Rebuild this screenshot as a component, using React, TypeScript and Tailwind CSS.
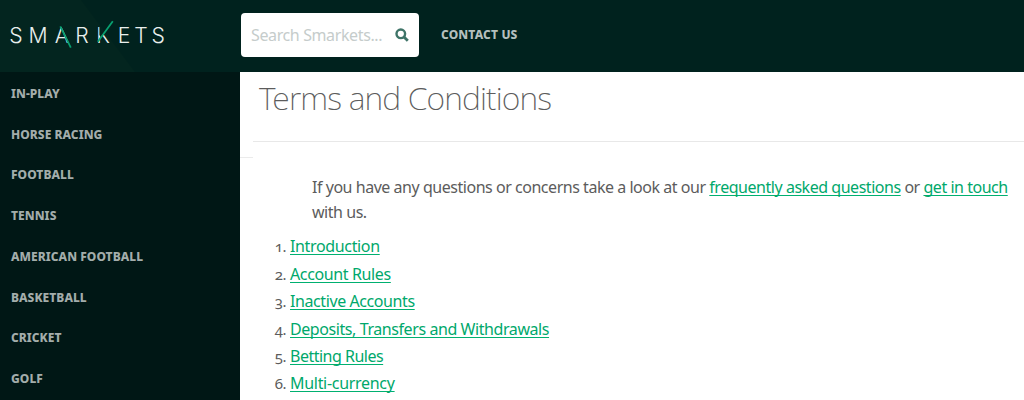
const sports = [
  "In-play",
  "Horse Racing",
  "Football",
  "Tennis",
  "American Football",
  "Basketball",
  "Cricket",
  "Golf",
];

const sections = [
  { title: "Introduction", tracking: "tracking-[-0.35px]" },
  { title: "Account Rules", tracking: "tracking-[-0.37px]" },
  { title: "Inactive Accounts", tracking: "tracking-[-0.41px]" },
  { title: "Deposits, Transfers and Withdrawals", tracking: "tracking-[-0.42px]" },
  { title: "Betting Rules", tracking: "tracking-[-0.5px]" },
  { title: "Multi-currency", tracking: "tracking-[-0.3px]" },
];

function Logo() {
  return (
    <svg width="240" height="72" viewBox="0 0 240 72" className="block" aria-label="Smarkets">
      <path d="M0 0H81L135 72H0Z" fill="#03251f" />
      {/* the green strokes take the place of one arm of the A and the K */}
      <clipPath id="a-left">
        <path d="M50 24H60L70 44H50Z" />
      </clipPath>
      <clipPath id="k-stem">
        <path d="M94 24H99.5V35L101 38L103.5 33.5L114 44H94Z" />
      </clipPath>
      <g
        fill="#e9efed"
        fontSize="21.2"
        fontWeight="300"
        textAnchor="middle"
        className="font-['Inter',sans-serif]"
      >
        <text x="16" y="42.5">S</text>
        <text x="38" y="42.5">M</text>
        <text x="61.8" y="42.5" clipPath="url(#a-left)">A</text>
        <text x="82" y="42.5">R</text>
        <text x="103" y="42.5" clipPath="url(#k-stem)">K</text>
        <text x="124" y="42.5">E</text>
        <text x="141" y="42.5">T</text>
        <text x="158.2" y="42.5">S</text>
      </g>
      <path d="M60.3 26.3L70.8 47.6M97.8 41.7L112.8 21.2" stroke="#08a070" strokeWidth="1.8" fill="none" />
    </svg>
  );
}

function TextLink({ children, className = "" }: { children: string; className?: string }) {
  return (
    <a
      href="#"
      className={`text-[#00a86b] underline decoration-[#00b070] decoration-1 underline-offset-[2px] [text-decoration-skip-ink:none] ${className}`}
    >
      {children}
    </a>
  );
}

export default function App() {
  return (
    <div className="h-[400px] w-[1024px] overflow-hidden bg-white font-['Noto_Sans',sans-serif] text-[#5c5c5c]">
      <header className="flex h-[72px] bg-[#00221e]">
        <Logo />
        <div className="ml-px mt-[13px] flex h-11 w-[178px] items-center rounded bg-white pl-[10px] pr-[10px]">
          <span className="flex-1 whitespace-nowrap text-base tracking-[-0.38px] text-[#c5cccb]">Search Smarkets...</span>
          <svg width="14" height="14" viewBox="0 0 14 14" fill="none" stroke="#3f7468" className="shrink-0">
            <circle cx="5.8" cy="5.8" r="4.3" strokeWidth="2.4" />
            <path d="M9 9L12.8 12.8" strokeWidth="2.8" />
          </svg>
        </div>
        <a
          href="#"
          className="ml-[22px] mt-[26px] text-xs leading-[18px] font-extrabold tracking-[0.15px] text-[#b3bfbd] uppercase"
        >
          Contact us
        </a>
      </header>
      <div className="flex h-[328px]">
        <nav className="w-60 shrink-0 bg-[#001715] pt-[1.6px] pl-[11px]">
          {sports.map((sport) => (
            <a
              key={sport}
              href="#"
              className="flex h-[40.75px] items-center text-xs font-extrabold tracking-[0.05px] text-[#a3adab] uppercase"
            >
              {sport}
            </a>
          ))}
        </nav>
        <div className="mt-[85px] h-px w-[13px] shrink-0 bg-[#ebebeb]" />
        <main className="flex-1">
          <h1 className="h-[70px] border-b border-[#e8e8e8] pl-[6px] text-[32px] leading-[51px] font-extralight tracking-[-0.87px]">
            Terms and Conditions
          </h1>
          <p className="mt-[33px] pl-[59px] text-base leading-[25px] tracking-[-0.465px] whitespace-nowrap">
            If you have any questions or concerns take a look at our <TextLink>frequently asked questions</TextLink> or{" "}
            <TextLink>get in touch</TextLink>
            <br />
            with us.
          </p>
          <ol className="mt-[11.4px]">
            {sections.map((section, i) => (
              <li key={section.title} className="flex h-[27.4px] items-baseline text-base leading-5">
                <span className="w-[37px] pr-[4px] text-right text-[15px] tracking-[-0.5px] oldstyle-nums">{i + 1}.</span>
                <TextLink className={section.tracking}>{section.title}</TextLink>
              </li>
            ))}
          </ol>
        </main>
      </div>
    </div>
  );
}
